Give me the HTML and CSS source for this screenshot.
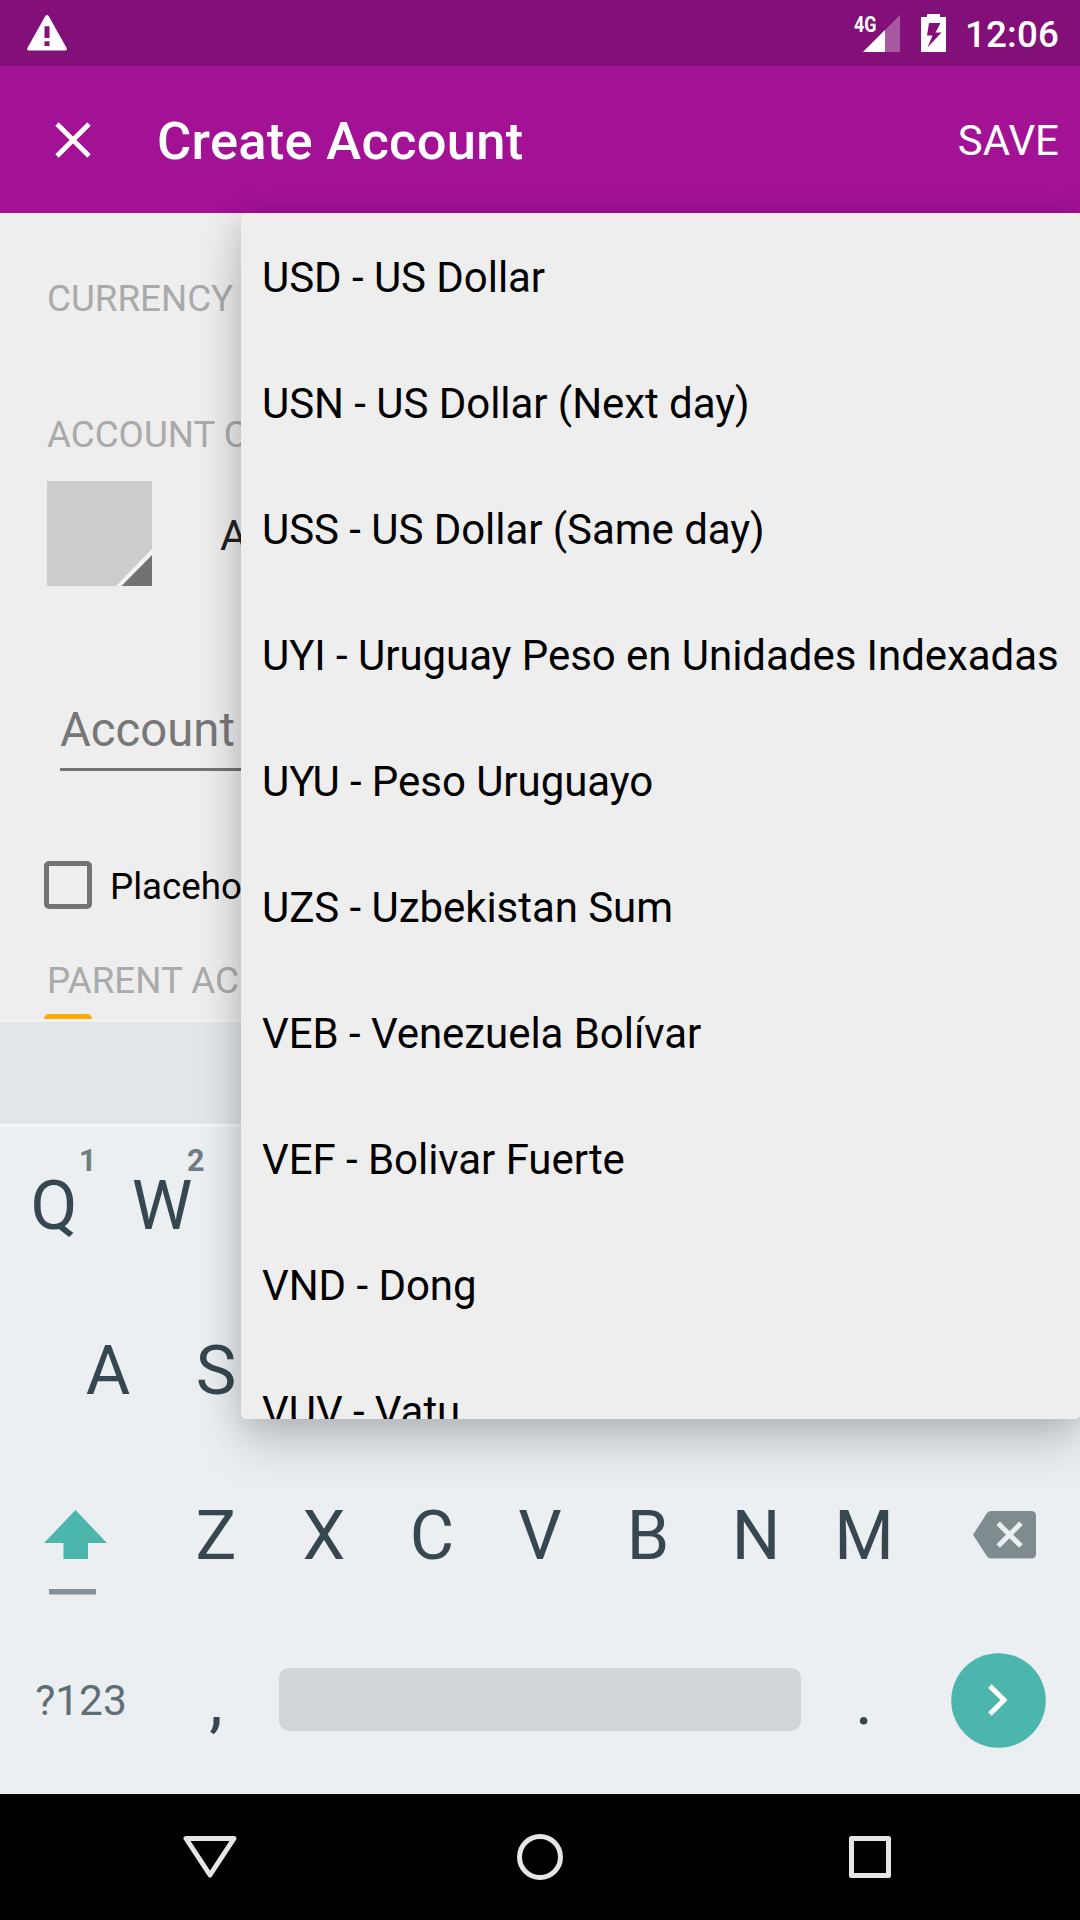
FILE: index.html
```html
<!DOCTYPE html>
<html lang="en">
<head>
<meta charset="utf-8">
<title>Create Account</title>
<link rel="stylesheet" href="styles.css">
</head>
<body>
<div class="screen">
  <header class="status-bar">
    <svg class="icon-warning" viewBox="0 0 40 36"><path fill="#fff" fill-rule="evenodd" d="M18.500.8Q20-.8 21.500.8L39.600 33Q40.300 35.500 38.200 35.500H1.800Q-.3 35.500.4 33ZM17.500 11.200V23H22.500V11.200ZM17.500 26.200V31H22.500V26.200Z"/></svg>
    <div class="status-icons">
      <svg class="icon-signal" viewBox="0 0 48 40">
        <path fill="#fff" fill-opacity=".3" d="M47 1V38H10Z"/>
        <path fill="#fff" d="M32 16V38H10Z"/>
        <text class="network" x="1" y="17.500" textLength="22.500" lengthAdjust="spacingAndGlyphs">4G</text>
      </svg>
      <svg class="icon-battery" viewBox="0 0 25 38"><path fill="#fff" fill-rule="evenodd" d="M6 0H19V3H25V38H0V3H6ZM8 9L6 21.500H11.500L6.500 33.500L20.500 18.500H14.500L19.500 9Z"/></svg>
      <span class="clock">12:06</span>
    </div>
  </header>

  <div class="app-bar">
    <svg class="icon-close" viewBox="0 0 36 36"><path stroke="#fff" stroke-width="4.800" d="M2 2L34 34M34 2L2 34"/></svg>
    <h1 class="title">Create Account</h1>
    <span class="save">SAVE</span>
  </div>

  <main class="form">
    <div class="label label-currency">CURRENCY</div>
    <div class="label label-color">ACCOUNT C</div>
    <div class="color-row">
      <svg class="swatch" viewBox="0 0 105 105"><path fill="#ccc" d="M0 0H105V105H0Z"/><path fill="#f5f5f5" d="M69 105L105 68V105Z"/><path fill="#727272" d="M74.500 105L105 74V105Z"/></svg>
      <span class="type">A</span>
    </div>
    <div class="field">Account</div>
    <div class="check-row"><span class="checkbox"></span><span class="check-label">Placeho</span></div>
    <div class="label label-parent">PARENT AC</div>
    <div class="checkbox-peek"></div>
  </main>

  <section class="keyboard">
    <div class="suggestions"></div>
    <div class="keys keys-top"><span class="key">Q<sup class="hint">1</sup></span><span class="key">W<sup class="hint">2</sup></span></div>
    <div class="keys keys-home"><span class="key">A</span><span class="key">S</span></div>
    <div class="keys">
      <span class="key key-wide">
        <svg class="icon-shift" viewBox="0 0 64 86"><path fill="#4db6ac" d="M31.500 0L63 33H44V49H19.500V33H0Z"/><path fill="#848f94" d="M5 79H52V84.500H5Z"/></svg>
      </span>
      <span class="key">Z</span><span class="key">X</span><span class="key">C</span><span class="key">V</span><span class="key">B</span><span class="key">N</span><span class="key">M</span>
      <span class="key key-wide">
        <svg class="icon-delete" viewBox="0 0 63 48"><path fill="#808b90" d="M18 0H58Q63 0 63 5V42.500Q63 47.500 58 47.500H18Q15.500 47.500 14 45.500L0 23.800L14 2Q15.500 0 18 0Z"/><path stroke="#ebeff2" stroke-width="5" d="M25.200 12.300L48 35.100M48 12.300L25.200 35.100"/></svg>
      </span>
    </div>
    <div class="keys">
      <span class="key key-wide key-symbols">?123</span>
      <span class="key">,</span>
      <span class="space"><span class="space-bar"></span></span>
      <span class="key">.</span>
      <span class="key key-wide">
        <svg class="icon-enter" viewBox="0 0 95 95"><circle cx="47.500" cy="47.500" r="47.300" fill="#4db6ac"/><path fill="none" stroke="#fff" stroke-width="5" d="M38.900 33.100L53 47L38.900 61"/></svg>
      </span>
    </div>
  </section>

  <nav class="nav-bar">
    <svg class="nav-icon" viewBox="0 0 56 56"><path d="M4 9.500H52L28 46Z"/></svg>
    <svg class="nav-icon" viewBox="0 0 56 56"><circle cx="28" cy="28" r="20.500"/></svg>
    <svg class="nav-icon" viewBox="0 0 56 56"><path d="M9.500 9.500H46.500V46.500H9.500Z"/></svg>
  </nav>

  <ul class="menu">
    <li class="option">USD - US Dollar</li>
    <li class="option">USN - US Dollar (Next day)</li>
    <li class="option">USS - US Dollar (Same day)</li>
    <li class="option">UYI - Uruguay Peso en Unidades Indexadas</li>
    <li class="option">UYU - Peso Uruguayo</li>
    <li class="option">UZS - Uzbekistan Sum</li>
    <li class="option">VEB - Venezuela Bolívar</li>
    <li class="option">VEF - Bolivar Fuerte</li>
    <li class="option">VND - Dong</li>
    <li class="option">VUV - Vatu</li>
  </ul>
</div>
</body>
</html>
```
FILE: styles.css
```css
* { box-sizing: border-box; }
body { margin: 0; font-family: Roboto, sans-serif; }
svg { display: block; flex: none; overflow: visible; }

.screen {
  position: relative;
  display: flex;
  flex-direction: column;
  width: 1080px;
  height: 1920px;
  overflow: hidden;
  background: #eee;
}

/* Status bar */
.status-bar {
  display: flex;
  justify-content: space-between;
  height: 66px;
  padding: 0 21px 0 27px;
  background: #830f79;
  color: #fff;
}
.icon-warning { width: 40px; height: 36px; margin-top: 15px; }
.status-icons { display: flex; }
.icon-signal { width: 48px; height: 40px; margin-top: 13.500px; }
.network { font: 700 22.500px Roboto, sans-serif; fill: #fff; }
.icon-battery { width: 25px; height: 38px; margin: 14px 19px 0 20px; }
.clock { font-size: 36.750px; font-weight: 500; line-height: 70px; letter-spacing: .15px; }

/* App bar */
.app-bar {
  display: flex;
  align-items: center;
  height: 147px;
  padding: 0 21px 0 55px;
  background: #a31295;
  color: #fff;
}
.icon-close { width: 36px; height: 36px; }
.title { margin: 3px 0 0 66px; font-size: 52.500px; font-weight: 500; line-height: 62px; letter-spacing: .27px; }
.save { margin-left: auto; padding-top: 2px; font-size: 42px; line-height: 50px; }

/* Form */
.form { height: 809px; border-bottom: 3px solid #f0f1f2; padding-left: 47px; }
.label { height: 44px; font-size: 36.750px; line-height: 44px; color: #aaa; white-space: nowrap; }
.label-currency { margin-top: 64px; }
.label-color { margin-top: 92px; }
.label-parent { margin-top: 50px; }
.color-row { display: flex; align-items: center; height: 105px; margin-top: 24px; }
.swatch { width: 105px; height: 105px; }
.type { padding-top: 4px; margin-left: 68px; font-size: 42px; line-height: 50px; color: #212121; }
.field {
  height: 71px;
  margin: 114px 60px 0 13px;
  border-bottom: 3px solid #737373;
  font-size: 47.250px;
  line-height: 60px;
  color: #777;
}
.check-row { display: flex; height: 48px; margin: 90px 0 0 -3px; }
.checkbox { width: 48px; height: 48px; border: 5px solid #737373; border-radius: 5px; }
.check-label { margin-left: 18px; font-size: 36.750px; line-height: 52px; color: #000; }
.checkbox-peek { width: 48px; height: 5px; margin: 11px 0 0 -3px; border-radius: 5px 5px 0 0; background: #ffab00; }

/* Keyboard */
.keyboard { height: 772px; background: #ebeff2; color: #37474f; }
.suggestions { height: 105px; background: #e2e6e9; border-bottom: 3px solid #f5f7f8; }
.keys { display: flex; height: 165px; }
.keys-top { height: 161px; padding-bottom: 3px; }
.keys-home { padding-left: 54px; }
.key {
  position: relative;
  display: flex;
  align-items: center;
  justify-content: center;
  width: 108px;
  font-size: 68.250px;
  line-height: 80px;
}
.key-wide { width: 162px; }
.hint {
  position: absolute;
  top: 16px;
  right: 11.500px;
  font-size: 30.500px;
  font-weight: 700;
  line-height: 36px;
  color: #6f7c82;
}
.icon-shift { width: 64px; height: 86px; margin: 35px 10px 0 0; }
.icon-delete { width: 63px; height: 48px; margin: -1px 0 0 10px; }
.key-symbols { font-size: 42.500px; color: #5f6e75; }
.icon-enter { width: 95px; height: 95px; margin: -1px 1px 0 0; }
.space { display: flex; align-items: center; width: 540px; padding: 0 9px 2px; }
.space-bar { width: 100%; height: 63px; border-radius: 10px; background: #d1d6d9; }

/* Navigation bar */
.nav-bar { display: flex; justify-content: space-between; align-items: center; height: 126px; padding: 0 182px; background: #000; }
.nav-icon { width: 56px; height: 56px; fill: none; stroke: #e6e6e6; stroke-width: 5; stroke-linejoin: round; }

/* Currency menu, floating over the form and the keyboard */
.menu {
  position: absolute;
  top: 213px;
  left: 241px;
  width: 839px;
  height: 1206px;
  margin: 0;
  padding: 2px 0 0 21px;
  overflow: hidden;
  list-style: none;
  border-radius: 5px;
  background: #eee;
  box-shadow: 0 24px 48px rgba(0, 0, 0, .18), 0 2px 34px rgba(0, 0, 0, .12);
}
.option { height: 126px; font-size: 42px; line-height: 126px; letter-spacing: -.05px; color: #000; white-space: nowrap; }
```
